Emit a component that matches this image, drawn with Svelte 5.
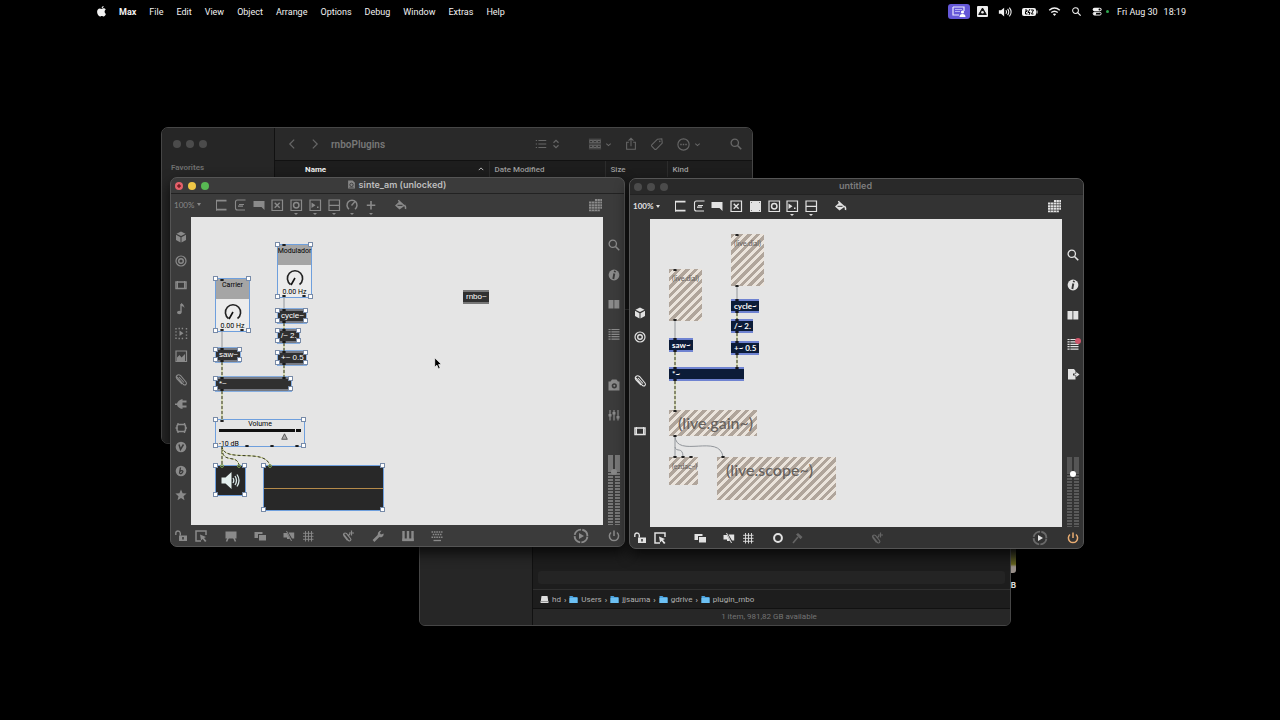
<script>
  const icons = {
    apple: '<path fill="currentColor" d="M10.6 1.200c.1 1.200-.9 2.700-2.400 2.700C8 2.600 9.200 1.300 10.600 1.200zM13.400 11c-.6 1.500-1.700 3.200-2.800 3.200-.9 0-1.200-.6-2.200-.6s-1.400.6-2.200.6C4.700 14.200 2.600 11.200 2.600 8.400c0-2.700 1.500-4.200 3.200-4.200 1 0 1.800.6 2.400.6.6 0 1.500-.7 2.700-.7 1 0 1.800.5 2.300 1.300-2 1.100-1.800 4.500.2 5.600z"/>',
    volume: '<path fill="currentColor" d="M1 6h2.500L7 3v10L3.500 10H1z"/><path fill="none" stroke="currentColor" stroke-width="1.200" d="M9 6q1.400 2 0 4M11 4.500q2.600 3.500 0 7M13 3q4 5 0 10"/>',
    battery: '<rect x="0" y="4" width="14" height="8" rx="2" fill="currentColor"/><path d="M15 6.500v3" stroke="currentColor"/><path d="M3 6h2v1.500H3.500V10H5.500M9 6h2.500L9.500 10h2M8 5L6 8.500h2L7 11" stroke="#000" fill="none"/>',
    wifi: '<path fill="none" stroke="currentColor" stroke-width="1.800" d="M1.500 6.500q6.500-5.500 13 0M4 9.300q4-3.300 8 0"/><path fill="currentColor" d="M5.900 11.200q2.100-1.700 4.200 0L8 13.500z"/>',
    search: '<circle cx="6.600" cy="6.600" r="4.200" fill="none" stroke="currentColor" stroke-width="1.500"/><path d="M9.700 9.700L14 14" stroke="currentColor" stroke-width="1.800"/>',
    control: '<rect x="1" y="2.500" width="13" height="5" rx="2.500" fill="currentColor"/><circle cx="11" cy="5" r="1.500" fill="#000"/><rect x="1.700" y="9.200" width="11.600" height="4" rx="2" fill="none" stroke="currentColor" stroke-width="1.400"/><circle cx="4" cy="11.200" r="2" fill="currentColor"/>',
    share: '<path fill="none" stroke="currentColor" stroke-width="1.200" d="M5.500 6H3v8h10V6h-2.500M8 10.500V1.500M5.200 4.200L8 1.500l2.800 2.700"/>',
    tag: '<path fill="none" stroke="currentColor" stroke-width="1.200" d="M8.500 2.500L13.500 2l.5 5-7 7q-.8.600-1.500 0L2 10.500q-.6-.8 0-1.500z"/><circle cx="11.200" cy="5" r=".9" fill="currentColor"/>',
    more: '<circle cx="8" cy="8" r="6" fill="none" stroke="currentColor" stroke-width="1.200"/><path d="M4.500 8h1.600M7.200 8h1.600M9.900 8h1.600" stroke="currentColor" stroke-width="1.600"/>',
    list: '<path d="M2 4h1.500M5 4h9M2 8h1.500M5 8h9M2 12h1.500M5 12h9" stroke="currentColor" stroke-width="1.200"/>',
    groups: '<path d="M1 2.500h14M1 8h14M1 13.500h14" stroke="currentColor" stroke-width=".8"/><path d="M2 4h3v2.500H2zM6.500 4h3v2.500h-3zM11 4h3v2.500h-3zM2 9.500h3V12H2zM6.500 9.500h3V12h-3zM11 9.500h3V12h-3z" fill="none" stroke="currentColor" stroke-width="1.200"/>',
    left: '<path d="M10.500 3L5.500 8l5 5" fill="none" stroke="currentColor" stroke-width="1.400"/>',
    right: '<path d="M5.500 3l5 5-5 5" fill="none" stroke="currentColor" stroke-width="1.400"/>',
    down: '<path d="M3 6l5 4.500L13 6" fill="none" stroke="currentColor" stroke-width="2.400"/>',
    up: '<path d="M2 11l6-6 6 6" fill="none" stroke="currentColor" stroke-width="2"/>',
    updown: '<path d="M4 6l4-4 4 4M4 10l4 4 4-4" fill="none" stroke="currentColor" stroke-width="1.800"/>',
    doc: '<path d="M2 1h8l4 4v10H2z" fill="#888"/><circle cx="8" cy="8.500" r="3" fill="none" stroke="#333" stroke-width="1.500"/><path d="M4 13h8" stroke="#333"/>',
    object: '<path d="M3.500 3v10.500" stroke="currentColor" stroke-width="1"/><path d="M3 3.700h10.500M3 12.700h10.500" stroke="currentColor" stroke-width="1.700"/>',
    message: '<path d="M13.500 3H5.500Q3.500 3 3.500 5v6q0 2 2 2H13" fill="none" stroke="currentColor" stroke-width="1.100"/><path d="M6 9.200h5M7 7.500h5" stroke="currentColor" stroke-width="1.200"/>',
    comment: '<path d="M2.500 4h11v9l-3-3h-8z" fill="currentColor"/>',
    toggle: '<path d="M3 3h10.500v10.500H3z" fill="none" stroke="currentColor" stroke-width="1.200"/><path d="M5.700 5.700l5 5m0-5l-5 5" stroke="currentColor" stroke-width="1.400"/>',
    button: '<path d="M3 3h10.500v10.500H3z" fill="none" stroke="currentColor" stroke-width="1.200"/><circle cx="8.250" cy="8.250" r="2.700" fill="none" stroke="currentColor" stroke-width="1.500"/>',
    filled: '<rect x="3" y="3" width="11" height="11" fill="currentColor"/><path d="M4 4h1v1H4zM12 4h1v1h-1zM4 12h1v1H4zM12 12h1v1h-1z" fill="#777"/>',
    number: '<path d="M3 3h10.500v10.500H3z" fill="none" stroke="currentColor" stroke-width="1.200"/><path d="M4.500 5.500l4 2.700-4 2.700zM10 9.500h1.500V11H10z" fill="currentColor"/>',
    slider: '<path d="M3 3h10.500v10.500H3zM3 8.300h10.500" fill="none" stroke="currentColor" stroke-width="1.200"/>',
    dial: '<path d="M5 12.200A5 5 0 1 1 11 12.200" fill="none" stroke="currentColor" stroke-width="1.500"/><path d="M7.500 8.500L11 4.500" stroke="currentColor" stroke-width="1.400"/>',
    plus: '<path d="M8 4v8.500M3.800 8.200h8.500" stroke="currentColor" stroke-width="1.600"/>',
    bucket: '<path d="M8 4l5 4.500-5.500 4L3 8.500z" fill="currentColor"/><path d="M6.500 3l1.500 3M12.500 8q1.500 2 1 4" stroke="currentColor" stroke-width="1.500" fill="none"/><path d="M5.500 8.300h5" stroke="#333"/>',
    keys: '<path d="M7 2h7v2H7zM1 4.600h13v2H1zM1 7.200h13v2H1zM1 9.800h13v2H1zM1 12.400h11v1.800H1z" fill="currentColor"/><path d="M3.500 2v12M6.500 2v12M9.500 2v12M12.200 2v12" stroke="#444" stroke-width=".5"/>',
    cube: '<path d="M8 2.500l4.500 2.200L8 7 3.500 4.700zM3 5.700l4.500 2.500v5.300L3 11zM13 5.700L8.500 8.200v5.300L13 11z" fill="currentColor"/>',
    target: '<circle cx="8" cy="8" r="5" fill="none" stroke="currentColor" stroke-width="1.200"/><circle cx="8" cy="8" r="2.300" fill="none" stroke="currentColor" stroke-width="1.400"/>',
    rack: '<path d="M3 5h10v6.500H3z" fill="none" stroke="currentColor" stroke-width="1.500"/><path d="M4.500 4v8M11.500 4v8" stroke="currentColor"/>',
    note: '<path d="M8 3v8" stroke="currentColor" stroke-width="1.400"/><path d="M8 2q3 1 3.500 5-1-2-3.500-2z" fill="currentColor"/><ellipse cx="6.300" cy="11.500" rx="2.300" ry="1.800" fill="currentColor"/>',
    video: '<path d="M3 3v11M13.500 3v11M5.500 3.500h6M5.500 13.500h6" stroke="currentColor" stroke-width="1.400" stroke-dasharray="1.400 1.800"/><path d="M6.500 5.500l4 2.800-4 2.800z" fill="currentColor"/>',
    image: '<path d="M3 3h10.500v10.500H3z" fill="none" stroke="currentColor" stroke-width="1.200"/><path d="M4 13V9.500L6.500 7l2 2.500L12 6v7z" fill="currentColor"/>',
    clip: '<path d="M4 5l6.500 7.500q1.500 1 2.500 0 1-1.200 0-2.500L7.500 3.500Q5.500 2 4 3.500 2.500 5 4 7l5 5M6 5l5 5.500" fill="none" stroke="currentColor" stroke-width="1.100"/>',
    plug: '<path d="M2 7.500h2Q5 4 9.500 3v10Q5 12 4 9H2z" fill="currentColor"/><path d="M9 5.500h4.500M9 10.500h4.500" stroke="currentColor" stroke-width="2"/>',
    chip: '<rect x="4" y="4.500" width="8.500" height="7" rx="2" fill="none" stroke="currentColor" stroke-width="1.500"/><path d="M5 3v2M11.500 3v2M5 11v2M11.500 11v2M2.500 8h2M12 8h2" stroke="currentColor" stroke-width="1.400"/>',
    vizzie: '<circle cx="8" cy="8" r="5.300" fill="currentColor"/><path d="M6 5.500l1.500 5 3-5" stroke="#3a3a3a" stroke-width="1.500" fill="none"/>',
    beap: '<circle cx="8" cy="8" r="5.300" fill="currentColor"/><path d="M7.500 4.500l-1 5.500q1 1.500 2.500 0t.5-2.200-2.500.5" stroke="#3a3a3a" stroke-width="1.300" fill="none"/>',
    star: '<path d="M8 2.500l1.600 3.800 4 .3-3.100 2.600 1 4L8 11l-3.500 2.200 1-4-3.100-2.600 4-.3z" fill="currentColor"/>',
    info: '<circle cx="8" cy="8" r="5.400" fill="currentColor"/><path d="M9 3.800l-.3 1.500M8.300 6.500L7.300 12" stroke="#3a3a3a" stroke-width="1.900"/>',
    columns: '<path d="M2.500 4h5v8.500h-5zM8.300 4h5v8.500h-5z" fill="currentColor"/>',
    console: '<path d="M2.500 3.500h11M2.500 5.900h11M2.500 8.300h11M2.500 10.700h11M2.500 13.100h11" stroke="currentColor" stroke-width="1.200"/><path d="M5 3v11" stroke="#3a3a3a" stroke-width=".8"/>',
    camera: '<path d="M2.500 4.500h2L6 2.500h4.500L12 4.500h1.500v9h-11z" fill="currentColor"/><circle cx="8.300" cy="8.800" r="2.600" fill="#3a3a3a"/><circle cx="8.300" cy="8.800" r="1" fill="currentColor"/>',
    mixer: '<path d="M4 3v10.500M8 3v10.500M12 3v10.500" stroke="currentColor" stroke-width="1.200"/><path d="M2.500 7h3v2.500h-3zM6.500 5h3v2.500h-3zM10.500 9h3v2.500h-3z" fill="currentColor"/>',
    exporter: '<path d="M3 3h6l1.500 2v2.500H8v2h2.500v4H3z" fill="currentColor"/><path d="M9.500 7.700h1.700V6l3.300 2.500-3.300 2.500V9.300H9.500z" fill="currentColor"/>',
    power: '<path d="M5 4.500A4.600 4.600 0 1 0 11 4.500M8 2.500v5.500" fill="none" stroke="currentColor" stroke-width="1.500"/>',
    lock: '<path d="M2.800 7V5Q3 3 5 3t2.300 2v2.500" fill="none" stroke="currentColor" stroke-width="1.400"/><path d="M6 7.500h8V13H6z" fill="currentColor"/><path d="M10 9v2.500" stroke="#333" stroke-width="1.500"/>',
    select: '<path d="M13 7V3H3v10h5" fill="none" stroke="currentColor" stroke-width="1.500"/><path d="M7 6.500l6 2.500-2 1 2.500 3-1.500 1-2.300-3L8 12.500z" fill="currentColor"/>',
    present: '<path d="M2.500 3.500h11v7h-11z" fill="currentColor"/><path d="M5.500 9l-2 4.500M10.500 9l2 4.500" stroke="currentColor" stroke-width="1.600"/>',
    layers: '<path d="M2.500 4h8v2H6v4H2.500z" fill="currentColor"/><path d="M7 7h7v5.500H7z" fill="currentColor"/>',
    unlink: '<path d="M2.500 5h3.500l3 6H6V9.500H2.500zM7.500 4.500h5.700v6H11z" fill="currentColor"/><path d="M5.500 3l5 10" stroke="currentColor"/>',
    grid: '<path d="M5.500 3v10.500M8.500 3v10.500M11.500 3v10.500M3 5.300h10.500M3 8.300h10.500M3 11.300h10.500" stroke="currentColor" stroke-width=".9"/>',
    patch: '<path d="M3.500 6l5 6.500q1.200 1 2 0 .8-1 0-2L6.500 5.500q-1.500-1-2.500 0-1 1.200 0 2.500l3.500 4.500" fill="none" stroke="currentColor" stroke-width="1.200"/><path d="M11.500 2.500v5M9 5h5M8 8l2-2" stroke="currentColor" stroke-width="1.200"/>',
    wrench: '<path d="M3.500 13L9 7.500" stroke="currentColor" stroke-width="2.500"/><path d="M11.500 2.500L9.800 5l1.200 1.500 2.600-1q.5 2-1.200 3.200-1.800 1-3.500 0Q7 7 8 4.700 9.200 2.500 11.500 2.500z" fill="currentColor"/>',
    piano: '<path d="M3.500 3v10M8 3v10M12.500 3v10" stroke="currentColor" stroke-width="2.400"/><path d="M2.300 11.800h11.400" stroke="currentColor" stroke-width="2.700"/>',
    keyboard: '<path d="M2.500 4h11M2.500 9.200h11" stroke="currentColor" stroke-width="1.500" stroke-dasharray="1.600 .8"/><path d="M3.700 6.600h9" stroke="currentColor" stroke-width="1.500" stroke-dasharray="1.600 .8"/><path d="M4.500 12.500h7.500" stroke="currentColor" stroke-width="1.300"/>',
    ring: '<circle cx="8" cy="8" r="3.900" fill="none" stroke="currentColor" stroke-width="2"/>',
    hammer: '<path d="M4 13l5-6" stroke="currentColor" stroke-width="1.600"/><path d="M7 4.500L9 3l4.500 4-2 2.200z" fill="currentColor"/>',
    play: '<circle cx="8" cy="8" r="6.400" fill="none" stroke="var(--play-ring)" stroke-width="1.900" stroke-dasharray="8.800 1.250" stroke-dashoffset="-.6"/><path d="M6 5l5 3-5 3z" fill="currentColor"/>'
  };

  const menus = ['Max', 'File', 'Edit', 'View', 'Object', 'Arrange', 'Options', 'Debug', 'Window', 'Extras', 'Help'];
  const crumbs = ['Users', 'jjsauma', 'gdrive', 'plugin_rnbo'];

  const patchers = [
    {
      id: 'main', title: 'sinte_am (unlocked)',
      tools: ['object', 'message', 'comment', 'toggle', 'button', 'number', 'slider', 'dial', 'plus'],
      menuFrom: 4,
      left: [['cube', 12], ['target', 8], ['rack', 8], ['note', 8], ['video', 8], ['image', 7], ['clip', 8], ['plug', 8], ['chip', 8], ['vizzie', 3], ['beap', 8], ['star', 8]],
      right: [['search', 20], ['info', 14], ['columns', 13], ['console', 14], ['camera', 35], ['mixer', 14]],
      bottom: [['lock', 0], ['select', 4], ['present', 14], ['layers', 13], ['unlink', 13], ['grid', 3], ['patch', 24], ['wrench', 14], ['piano', 14], ['keyboard', 13]],
      boxes: [
        { t: 'cycle~', x: 87, y: 92, w: 28 }, { t: '/~ 2.', x: 87, y: 112, w: 21 },
        { t: '+~ 0.5', x: 87, y: 134, w: 28 }, { t: 'saw~', x: 25, y: 131, w: 24 },
        { t: '*~', x: 25, y: 160, w: 75 }, { t: 'rnbo~', x: 272, y: 73, w: 26, plain: true }
      ],
      control: ['M93 79V92', 'M31 114V131'],
      signal: ['M93 106V112', 'M93 126V134', 'M93 148V160', 'M31 145V160', 'M31 174V203', 'M31 229V249', 'M31 231C31 248 47 236 48 249', 'M31 229C32 247 75 230 79 249'],
      ports: [[93, 28], [93, 79], [93, 93], [93, 105], [93, 113], [93, 125], [93, 135], [93, 147], [93, 161], [31, 63], [31, 113], [31, 132], [31, 144], [31, 161], [31, 173], [31, 204], [56, 229], [81, 229], [106, 229], [51, 113], [113, 79]]
    },
    {
      id: 'sub', title: 'untitled',
      tools: ['object', 'message', 'comment', 'toggle', 'filled', 'button', 'number', 'slider'],
      menuFrom: 6,
      left: [['cube', 86], ['target', 8], ['clip', 28], ['rack', 34]],
      right: [['search', 28], ['info', 14], ['columns', 14], ['console', 13], ['exporter', 14]],
      bottom: [['lock', 0], ['select', 4], ['layers', 24], ['unlink', 13], ['grid', 3], ['ring', 14], ['hammer', 3], ['patch', 64]],
      boxes: [
        { t: 'cycle~', x: 81, y: 80, w: 28 }, { t: '/~ 2.', x: 81, y: 100, w: 22 },
        { t: '+~ 0.5', x: 81, y: 122, w: 28 }, { t: 'saw~', x: 19, y: 119, w: 24 },
        { t: '*~', x: 19, y: 148, w: 75 }
      ],
      control: ['M87 67V80', 'M25 102V119', 'M25 217V238', 'M25 228C26 234 33 227 33 238', 'M25 217C26 240 70 214 73 238'],
      signal: ['M87 94V100', 'M87 114V122', 'M87 136V148', 'M25 133V148', 'M25 162V191'],
      ports: [[87, 16], [87, 67], [87, 81], [87, 93], [87, 101], [87, 113], [87, 123], [87, 135], [87, 149], [25, 51], [25, 101], [25, 120], [25, 132], [25, 149], [25, 161], [25, 192], [25, 217], [25, 238], [33, 238], [41, 238], [73, 238]]
    }
  ];

  const dials = [{ name: 'Modulador', x: 87, y: 28 }, { name: 'Carrier', x: 25, y: 62 }];
  const missing = [
    { t: '(live.dial)', x: 81, y: 15, w: 33, h: 52 },
    { t: '(live.dial)', x: 19, y: 50, w: 33, h: 52 },
    { t: '(live.gain~)', x: 19, y: 191, w: 88, h: 26, big: true },
    { t: '(ezdac~)', x: 19, y: 238, w: 29, h: 28 },
    { t: '(live.scope~)', x: 67, y: 238, w: 119, h: 43, big: true }
  ];
</script>

{#snippet icon(name, size = 16)}
  <svg class="icon" width={size} height={size} viewBox="0 0 16 16" aria-hidden="true">{@html icons[name]}</svg>
{/snippet}

{#snippet handles()}
  <i class="handle tl"></i><i class="handle tr"></i><i class="handle bl"></i><i class="handle br"></i>
{/snippet}

{#snippet lights()}
  <div class="lights"><button aria-label="Close"></button><button aria-label="Minimize"></button><button aria-label="Zoom"></button></div>
{/snippet}

{#snippet meter()}
  <div class="meter"><div class="level"></div><div class="level"></div><i class="knob"></i></div>
{/snippet}

<header class="menubar">
  <nav>
    <a class="logo" href="#apple" aria-label="Apple menu">{@render icon('apple', 13)}</a>
    {#each menus as m}<a href="#{m}" class:app={m === 'Max'}>{m}</a>{/each}
  </nav>
  <div class="status">
    <button class="sharing" aria-label="Screen sharing">
      <svg width="14" height="12" viewBox="0 0 14 12"><path d="M1 1h11v4M1 1v8h6" fill="none" stroke="#eceaff" stroke-width="1.200"/><path d="M3 3.500h7M3 5.500h5" stroke="#b6b0f5"/><circle cx="10.500" cy="6" r="1.600" fill="#fff"/><path d="M7.500 11q0-3 3-3t3 3z" fill="#fff"/></svg>
    </button>
    <button aria-label="Drive"><svg width="11" height="11" viewBox="0 0 11 11"><rect width="11" height="11" rx="1" fill="#eee"/><path d="M5.500 2L9.300 8.500H1.700z" fill="#111" stroke="#111" stroke-linejoin="round"/><circle cx="5.500" cy="6.300" r="1.300" fill="#eee"/></svg></button>
    <button aria-label="Sound">{@render icon('volume', 14)}</button>
    <button aria-label="Battery">{@render icon('battery', 16)}</button>
    <button aria-label="Wi-Fi">{@render icon('wifi', 13)}</button>
    <button aria-label="Search">{@render icon('search', 11)}</button>
    <button class="control" aria-label="Control center">{@render icon('control', 11)}<i></i></button>
    <time><span>Fri Aug 30</span><span>18:19</span></time>
  </div>
</header>

<main class="desktop">
  <div class="file">
    <i></i><span>B</span>
  </div>

  <section class="finder back" aria-label="rnboPlugins">
    <aside>
      {@render lights()}
      <h2>Favorites</h2>
    </aside>
    <div class="pane">
      <div class="bar">
        <button aria-label="Back">{@render icon('left', 14)}</button>
        <button aria-label="Forward">{@render icon('right', 14)}</button>
        <h1>rnboPlugins</h1>
        <div class="actions">
          <button class="pair" aria-label="View as list">{@render icon('list', 14)}{@render icon('updown', 10)}</button>
          <button class="pair" aria-label="Group">{@render icon('groups', 14)}{@render icon('down', 7)}</button>
          <button aria-label="Share">{@render icon('share', 14)}</button>
          <button aria-label="Tags">{@render icon('tag', 14)}</button>
          <button class="pair" aria-label="More">{@render icon('more', 15)}{@render icon('down', 7)}</button>
          <button class="find" aria-label="Search">{@render icon('search', 14)}</button>
        </div>
      </div>
      <table>
        <thead>
          <tr><th class="name"><div>Name {@render icon('up', 6)}</div></th><th class="date">Date Modified</th><th class="size">Size</th><th>Kind</th></tr>
        </thead>
      </table>
    </div>
  </section>

  <section class="finder front" aria-label="plugin_rnbo">
    <aside></aside>
    <div class="pane">
      <div class="rows"><div class="row"></div></div>
      <nav class="path">
        <a href="#hd"><svg width="9" height="9" viewBox="0 0 9 9"><path d="M1.500 1h6L8.500 8h-8z" fill="#ddd"/><path d="M.5 6.500h8" stroke="#999"/></svg>hd</a>
        {#each crumbs as c}
          <b>›</b>
          <a href="#{c}"><svg width="9" height="9" viewBox="0 0 9 9"><path d="M.5 1h3l1 1h4v6h-8z" fill="#4ba3df"/><path d="M.5 3h8v5h-8z" fill="#6cc0f3"/></svg>{c}</a>
        {/each}
      </nav>
      <footer>1 item, 981,82 GB available</footer>
    </div>
  </section>

  {#each patchers as p}
    <section class="patcher {p.id}" aria-label={p.title}>
      <div class="title">
        {@render lights()}
        <h1>{#if p.id === 'main'}{@render icon('doc', 9)}{/if}{p.title}</h1>
      </div>
      <div class="toolbar">
        <label class="zoom"><select aria-label="Zoom level"><option>100%</option></select><i></i></label>
        <div class="tools">
          {#each p.tools as t, i}
            <button aria-label={t} class:more={i >= p.menuFrom}>{@render icon(t)}</button>
          {/each}
        </div>
        <button class="bucket" aria-label="Format">{@render icon('bucket')}</button>
        <button class="keys" aria-label="Toolbar layout">{@render icon('keys')}</button>
      </div>
      <div class="rail">
        {#each p.left as [name, gap]}
          <button aria-label={name} style:--gap="{gap}px">{@render icon(name)}</button>
        {/each}
      </div>
      <div class="canvas">
        {#if p.id === 'main'}
          {#each dials as d}
            <div class="node live" style:left="{d.x}px" style:top="{d.y}px">
              <span>{d.name}</span>
              <svg width="20" height="20" viewBox="0 0 20 20"><path d="M5.500 16.500A7.600 7.600 0 1 1 14.500 16.500" fill="none" stroke="#222" stroke-width="1.600"/><path d="M10 10L6 17" stroke="#111" stroke-width="1.600"/></svg>
              <em>0.00 Hz</em>
              {@render handles()}
            </div>
          {/each}
          <div class="node gain">
            <span>Volume</span>
            <i class="track"></i>
            <svg width="7" height="7" viewBox="0 0 7 7"><path d="M3.500 .8L6.300 6.300H.7z" fill="#aaa" stroke="#444" stroke-width=".8"/></svg>
            <em>-10 dB</em>
            {@render handles()}
          </div>
          <div class="node dac">
            <svg width="21" height="21" viewBox="0 0 21 21"><path d="M1.500 7.500h4L11.500 2v17l-6-5.500h-4z" fill="#e4efee"/><path d="M13 8q1.600 2.500 0 5M15 6q3 4.500 0 9M17 4.500q4 6 0 12" fill="none" stroke="#dceaea" stroke-width="1.300"/></svg>
            {@render handles()}
          </div>
          <div class="node scope">{@render handles()}</div>
        {:else}
          {#each missing as m}
            <div class="node hatch" class:big={m.big} style:left="{m.x}px" style:top="{m.y}px" style:width="{m.w}px" style:height="{m.h}px">{m.t}</div>
          {/each}
        {/if}
        {#each p.boxes as b}
          <div class="node box" class:plain={b.plain} style:left="{b.x}px" style:top="{b.y}px" style:width="{b.w}px">
            {b.t}
            {#if p.id === 'main' && !b.plain}{@render handles()}{/if}
          </div>
        {/each}
        <svg class="wires" aria-hidden="true">
          {#each p.control as d}<path class="ctl" {d} />{/each}
          {#each p.signal as d}<path class="sig" {d} /><path class="dash" {d} />{/each}
          {#each p.ports as [x, y]}<ellipse cx={x} cy={y} rx="2" ry="1" />{/each}
          {#if p.id === 'main'}
            {#each [31, 48, 79] as x}<circle cx={x} cy="249" r="1.500" />{/each}
          {/if}
        </svg>
        {#if p.id === 'main'}
          <svg class="cursor" width="9" height="13" viewBox="0 0 9 13"><path d="M.7 .8v9.400l2.200-2 1.600 3.700 1.700-.8-1.600-3.500h3z" fill="#000" stroke="#fff" stroke-width=".7"/></svg>
        {/if}
      </div>
      <div class="rail side">
        {#each p.right as [name, gap]}
          <button aria-label={name} class={name} style:--gap="{gap}px">{@render icon(name, name === 'search' ? 14 : 16)}</button>
        {/each}
        {@render meter()}
      </div>
      <div class="bottom">
        {#each p.bottom as [name, gap]}
          <button aria-label={name} class={name} style:--gap="{gap}px">{@render icon(name)}</button>
        {/each}
        <button class="play" aria-label="Play">{@render icon('play')}</button>
        <button class="power" aria-label="Audio on">{@render icon('power')}</button>
      </div>
    </section>
  {/each}
</main>

<style>
  :global(body) { background: #000; }
  * { box-sizing: border-box; }
  button { display: flex; align-items: center; justify-content: center; flex: none; padding: 0; border: 0; background: none; color: inherit; }
  a { color: inherit; text-decoration: none; }
  h1, h2 { margin: 0; font-size: inherit; }
  i, em { display: block; font-style: normal; }
  svg { display: block; flex: none; }

  .menubar { position: relative; z-index: 1; display: flex; justify-content: space-between; height: 23px; padding: 0 94px 0 95px; color: #f2f2f2; font: 400 9px Roboto, sans-serif; }
  .menubar nav, .status, time { display: flex; align-items: center; }
  .menubar nav { gap: 13px; }
  .logo { margin-right: -2px; }
  .app { font-weight: 700; }
  .status { gap: 10px; }
  .sharing { width: 22px; height: 15px; margin-right: -3px; border-radius: 3px; background: #6558d8; }
  .control { gap: 3px; }
  .control i { width: 3px; height: 3px; border-radius: 50%; background: #2fa84f; }
  time { gap: 6px; margin-left: -2px; }

  .desktop { position: absolute; inset: 0; overflow: hidden; min-height: 640px; }
  section { position: absolute; overflow: hidden; }
  .file { position: absolute; left: 1002px; top: 548px; width: 14px; color: #ddd; font: 700 8px/10px Inter, sans-serif; text-align: right; }
  .file i { height: 25px; margin-bottom: 7px; border-radius: 0 0 3px 3px; background: linear-gradient(#222, #65641e 65%, #99908a 75%); }
  .lights { display: flex; }
  .lights button { border-radius: 50%; background: #4b4b4b; }

  .finder { display: flex; width: 592px; height: 317px; border: 1px solid #464646; border-radius: 7px; background: #1d1d1d; color: #9d9d9d; font: 500 8px Roboto, sans-serif; }
  .finder aside { flex: none; width: 113px; border-right: 1px solid #111; background: #262626; }
  .back { left: 161px; top: 127px; }
  .back .lights { gap: 5px; padding: 12px 11px; }
  .back .lights button { width: 8px; height: 8px; }
  .back h2 { padding: 3px 9px; color: #707070; font-size: 8px; line-height: 10px; font-weight: 600; }
  .pane { display: flex; flex: 1; flex-direction: column; min-width: 0; }
  .bar { display: flex; align-items: center; gap: 9px; height: 33px; padding: 0 9px 0 10px; border-bottom: 1px solid #111; background: #292929; color: #666; }
  .bar h1 { color: #777; font: 600 10px Roboto, sans-serif; }
  .actions { display: flex; align-items: center; gap: 12px; margin-left: auto; }
  .pair { gap: 3px; }
  .actions .pair:first-child { margin-right: 15px; }
  .find { margin-left: 16px; }
  table { width: 100%; border-collapse: collapse; table-layout: fixed; }
  th { height: 16px; padding: 0 5px; border-left: 1px solid #2c2c2c; font-weight: 500; text-align: left; }
  th div { display: flex; align-items: center; justify-content: space-between; }
  .name { width: 214px; padding-left: 30px; border: 0; color: #f0f0f0; font-weight: 700; }
  .date { width: 116px; }
  .size { width: 62px; }

  .front { left: 419px; top: 309px; border-radius: 6px; }
  .rows { display: flex; align-items: flex-end; flex: 1; padding: 5px; }
  .row { flex: 1; height: 13px; border-radius: 3px; background: #242424; }
  .path { display: flex; align-items: center; gap: 3px; height: 19px; padding: 0 7px; border-top: 1px solid #303030; color: #b0b0b0; font-weight: 400; }
  .path a { display: flex; align-items: center; gap: 3px; }
  .path b { font-weight: 600; }
  .front footer { height: 17px; border-top: 1px solid #111; background: #272727; color: #747474; font-weight: 400; line-height: 16px; text-align: center; padding-right: 5px; }

  .patcher {
    --ink: #8a8a8a; --play-ring: #8a8a8a;
    display: grid; grid-template: 16px 23px 1fr 21px / 20px 1fr 21px; width: 455px; height: 370px;
    border: 1px solid #555; border-radius: 7px; background: #3b3b3b; color: var(--ink);
    box-shadow: 0 6px 14px #000b; font: 400 8px Lato, sans-serif;
  }
  .main { left: 170px; top: 177px; }
  .sub { --ink: #e2e2e2; --play-ring: #6a6a6a; left: 629px; top: 178px; grid-template-rows: 16px 24px 1fr 21px; height: 371px; background: #333; }
  .title, .toolbar, .bottom { grid-column: 1 / -1; display: flex; align-items: center; }
  .title { position: relative; border-bottom: 1px solid #222; padding-left: 4px; }
  .title .lights { gap: 5px; }
  .title .lights button { width: 8px; height: 8px; }
  .main .lights button:nth-child(1) { background: radial-gradient(#7b1d24 25%, #e4606a 35%); }
  .main .lights button:nth-child(2) { background: #efc746; }
  .main .lights button:nth-child(3) { background: #58b853; }
  .title h1 { position: absolute; inset: 0 2px 2px 0; display: flex; align-items: center; justify-content: center; gap: 3px; color: #bdbdbd; font: 600 9px Inter, sans-serif; pointer-events: none; }
  .title .lights { z-index: 1; }
  .sub .title { background: #292929; }
  .sub .title h1 { color: #7d7d7d; }
  .toolbar { padding: 0 20px 2px 3px; }
  .zoom { display: flex; align-items: center; width: 39px; }
  .zoom select { width: 21px; padding: 0; border: 0; appearance: none; background: none; color: inherit; font: 700 8px Lato, sans-serif; }
  .main .zoom select { font-weight: 400; }
  .zoom i { border: 2px solid transparent; border-top: 3px solid; border-bottom: 0; margin-left: 2px; }
  .tools { display: flex; justify-content: space-between; width: 166px; }
  .sub .tools { width: 147px; }
  .tools button { position: relative; }
  .more::after { content: ''; position: absolute; top: 16px; left: 6px; border: 2px solid transparent; border-top-color: currentColor; border-bottom: 0; }
  .bucket { margin-left: 13px; }
  .keys { margin-left: auto; }

  .rail { display: flex; flex-direction: column; align-items: center; }
  .rail button { width: 16px; height: 16px; margin-top: var(--gap); }
  .side { position: relative; }
  .meter { position: relative; display: flex; gap: 2px; margin-top: auto; }
  .level { width: 5px; height: 70px; background: linear-gradient(#777 0 16px, #0000 16px), repeating-linear-gradient(#777 0 2px, #3b3b3b 2px 3px); }
  .sub .level { background: linear-gradient(#555 0 16px, #0000 16px), repeating-linear-gradient(#5a5a5a 0 2px, #333 2px 3px); }
  .knob { position: absolute; left: 3px; top: 14px; width: 6px; height: 6px; border-radius: 50%; background: #888; }
  .sub .knob { background: #fff; }
  .sub .console::after { content: ''; position: absolute; margin: -6px 0 0 11px; width: 6px; height: 6px; border-radius: 50%; background: #d0566b; }

  .canvas { position: relative; overflow: hidden; background: #e5e5e5; }
  .bottom { padding: 0 2px; }
  .bottom button { margin-left: var(--gap); }
  .bottom .play { margin-left: auto; }
  .bottom .power { margin-left: 17px; }
  .sub .hammer, .sub .patch { color: #656565; }
  .sub .power { color: #e8ac72; }

  .node { position: absolute; white-space: nowrap; }
  .box { height: 14px; padding-left: 3px; border: solid #777b84; border-width: 2px 0; background: #303030; color: #fff; font: 400 8px/10px "Liberation Sans", sans-serif; box-shadow: 0 0 0 1px #86aee0; }
  .box.plain { border-color: #777; box-shadow: none; }
  .sub .box { border-color: #6f83d1; background: #0c1c38; box-shadow: none; font-family: Lato, sans-serif; font-weight: 700; }
  .handle { position: absolute; width: 5px; height: 5px; border: 1px solid #788ba8; background: #fff; z-index: 2; }
  .tl { left: -3px; top: -3px; }
  .tr { right: -2px; top: -3px; }
  .bl { left: -3px; bottom: -2px; }
  .br { right: -2px; bottom: -2px; }
  .live { display: flex; flex-direction: column; align-items: center; width: 33px; height: 52px; background: linear-gradient(#a5a5a5 20px, #ececec 20px); color: #000; font: 400 7px/10px Roboto, sans-serif; }
  .live, .gain, .dac, .scope { box-shadow: 0 0 0 1px #6e9fdd; }
  .live span { height: 23px; padding-top: 1px; }
  .live em { margin-top: -1px; }
  .gain { left: 25px; top: 203px; width: 88px; height: 26px; color: #000; font: 400 7px/8px Roboto, sans-serif; text-align: center; }
  .gain .track { height: 3px; margin: 1px 3px; background: linear-gradient(90deg, #111 76px, #e5e5e5 76px 77px, #111 77px); }
  .gain svg { margin: 0 0 0 65px; }
  .gain em { padding-left: 3px; text-align: left; }
  .dac { display: flex; align-items: center; justify-content: center; left: 25px; top: 249px; width: 29px; height: 29px; background: #282828; }
  .scope { left: 73px; top: 249px; width: 119px; height: 44px; background: linear-gradient(#282828 22px, #b58a4a 22px 23px, #282828 23px); }
  .hatch { padding: 4px 3px; overflow: hidden; background: repeating-linear-gradient(135deg, #b0a59b 0 3px, #ebe4dc 3px 6px); color: #66615d; font: 500 7px/10px Lato, sans-serif; }
  .big { padding: 0 9px; font: 500 16px/26px Lato, sans-serif; }
  .wires { position: absolute; inset: 0; width: 100%; height: 100%; }
  .wires path { fill: none; stroke: #92969b; }
  .wires .sig { stroke: #c6cf84; }
  .wires .dash { stroke: #343426; stroke-dasharray: 3 2; }
  .wires ellipse { fill: #111; }
  .wires circle { fill: none; stroke: #7a9a54; }
  .cursor { position: absolute; left: 243px; top: 140px; }
</style>
